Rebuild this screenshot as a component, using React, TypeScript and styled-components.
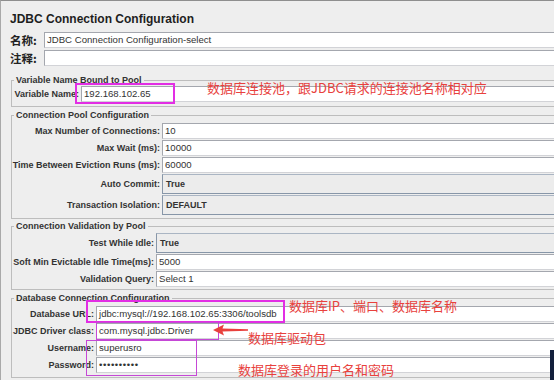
import React from "react";
import styled, { createGlobalStyle } from "styled-components";

const GlobalStyle = createGlobalStyle`
  html, body {
    margin: 0;
    padding: 0;
    background: #eeeeee;
    overflow: hidden;
  }
  body {
    font-family: "Liberation Sans", Arial, sans-serif;
  }
`;

const Root = styled.div`
  position: relative;
  width: 554px;
  height: 380px;
  overflow: hidden;
`;

const Panel = styled.div`
  width: 640px;
  height: 379px;
  border-top: 1px solid #8e8e8e;
  border-left: 1px solid #a9a9a9;
  background: #eeeeee;
  color: #333;
`;

const Title = styled.div`
  padding: 10px 0 0 9px;
  font: bold 12px/16px "Liberation Sans", Arial, sans-serif;
  color: #1e1e1e;
`;

const NameBlock = styled.div`
  display: grid;
  grid-template-columns: 32px 1fr;
  column-gap: 2px;
  row-gap: 2px;
  align-items: center;
  margin-top: 5px;
  padding-left: 9px;
`;

const NameLabel = styled.span`
  font: bold 11.5px/16px "Noto Sans CJK SC", "Liberation Sans", sans-serif;
  color: #222;
  white-space: nowrap;
`;

type GroupProps = {
  $top: number;
  $padTop: number;
  $padBottom: number;
};

const Group = styled.fieldset<GroupProps>`
  margin: ${(p) => p.$top}px 0 0 10px;
  padding: ${(p) => p.$padTop}px 0 ${(p) => p.$padBottom}px 0;
  min-width: 0;
  border: 1px solid #bdbdbd;
  border-right: none;
`;

const Legend = styled.legend`
  margin-left: 2px;
  padding: 0 2px;
  font: bold 9px/12px "Liberation Sans", Arial, sans-serif;
  color: #333;
  white-space: nowrap;
`;

const FormGrid = styled.div<{ $labelWidth: number }>`
  display: grid;
  grid-template-columns: ${(p) => p.$labelWidth}px 1fr;
  column-gap: 2px;
  row-gap: 1px;
  align-items: center;
`;

const Label = styled.span`
  text-align: right;
  font: bold 9px/12px "Liberation Sans", Arial, sans-serif;
  color: #333;
  white-space: nowrap;
`;

const TextField = styled.div`
  box-sizing: border-box;
  height: 16px;
  padding-left: 2px;
  background: #ffffff;
  border-top: 1px solid #a4a7ae;
  border-left: 1px solid #a4a7ae;
  border-bottom: 1px solid #d2d3d7;
  font: 9.6px/14px "Liberation Sans", Arial, sans-serif;
  color: #333;
  white-space: nowrap;
`;

const Dots = styled.span`
  letter-spacing: 0.6px;
`;

const Combo = styled.div`
  box-sizing: border-box;
  height: 20px;
  padding-left: 3px;
  background: #ececec;
  border: 1px solid #8796a8;
  border-top-color: #aab5c3;
  border-right: none;
  font: bold 9px/18px "Liberation Sans", Arial, sans-serif;
  color: #333;
`;

type MarkProps = {
  $x: number;
  $y: number;
  $w: number;
  $h: number;
  $thin?: boolean;
};

const Mark = styled.div<MarkProps>`
  position: absolute;
  left: ${(p) => p.$x}px;
  top: ${(p) => p.$y}px;
  width: ${(p) => p.$w}px;
  height: ${(p) => p.$h}px;
  box-sizing: border-box;
  border: ${(p) => (p.$thin ? "1px solid #c548d6" : "2px solid #e22ee4")};
  pointer-events: none;
`;

const Note = styled.div<{ $x: number; $y: number }>`
  position: absolute;
  left: ${(p) => p.$x}px;
  top: ${(p) => p.$y}px;
  font: 13px/16px "Noto Sans CJK SC", "Liberation Sans", sans-serif;
  color: #e8413d;
  white-space: nowrap;
`;

const Arrow = styled.svg`
  position: absolute;
  left: 213px;
  top: 324px;
`;

const Corner = styled.div`
  position: absolute;
  left: 550px;
  top: 350px;
  width: 4px;
  height: 30px;
  background: #13203c;
`;

const App: React.FC = () => {
  return (
    <Root>
      <GlobalStyle />
      <Panel>
        <Title>JDBC Connection Configuration</Title>
        <NameBlock>
          <NameLabel>名称:</NameLabel>
          <TextField>JDBC Connection Configuration-select</TextField>
          <NameLabel>注释:</NameLabel>
          <TextField />
        </NameBlock>

        <Group $top={8} $padTop={0} $padBottom={4}>
          <Legend>Variable Name Bound to Pool</Legend>
          <FormGrid $labelWidth={67}>
            <Label>Variable Name:</Label>
            <TextField>192.168.102.65</TextField>
          </FormGrid>
        </Group>

        <Group $top={2} $padTop={2} $padBottom={3}>
          <Legend>Connection Pool Configuration</Legend>
          <FormGrid $labelWidth={148}>
            <Label>Max Number of Connections:</Label>
            <TextField>10</TextField>
            <Label>Max Wait (ms):</Label>
            <TextField>10000</TextField>
            <Label>Time Between Eviction Runs (ms):</Label>
            <TextField>60000</TextField>
            <Label>Auto Commit:</Label>
            <Combo>True</Combo>
            <Label>Transaction Isolation:</Label>
            <Combo>DEFAULT</Combo>
          </FormGrid>
        </Group>

        <Group $top={1} $padTop={1} $padBottom={2}>
          <Legend>Connection Validation by Pool</Legend>
          <FormGrid $labelWidth={142}>
            <Label>Test While Idle:</Label>
            <Combo>True</Combo>
            <Label>Soft Min Evictable Idle Time(ms):</Label>
            <TextField>5000</TextField>
            <Label>Validation Query:</Label>
            <TextField>Select 1</TextField>
          </FormGrid>
        </Group>

        <Group $top={2} $padTop={2} $padBottom={4}>
          <Legend>Database Connection Configuration</Legend>
          <FormGrid $labelWidth={82}>
            <Label>Database URL:</Label>
            <TextField>jdbc:mysql://192.168.102.65:3306/toolsdb</TextField>
            <Label>JDBC Driver class:</Label>
            <TextField>com.mysql.jdbc.Driver</TextField>
            <Label>Username:</Label>
            <TextField>superusro</TextField>
            <Label>Password:</Label>
            <TextField>
              <Dots>••••••••••</Dots>
            </TextField>
          </FormGrid>
        </Group>
      </Panel>

      <Mark $x={75} $y={83} $w={100} $h={21} />
      <Note $x={207} $y={80}>数据库连接池，跟JDBC请求的连接池名称相对应</Note>

      <Mark $x={86} $y={300} $w={199} $h={23} />
      <Note $x={289} $y={298}>数据库IP、端口、数据库名称</Note>

      <Mark $x={96} $y={322} $w={123} $h={18} $thin />
      <Arrow width="36" height="12" viewBox="0 0 36 12">
        <polygon points="0,6 11,0.5 9.5,4.6 35,5.2 35,6.8 9.5,7.4 11,11.5" fill="#e8413d" />
      </Arrow>
      <Note $x={248} $y={330}>数据库驱动包</Note>

      <Mark $x={86} $y={340} $w={111} $h={36} $thin />
      <Note $x={238} $y={362}>数据库登录的用户名和密码</Note>

      <Corner />
    </Root>
  );
};

export default App;
